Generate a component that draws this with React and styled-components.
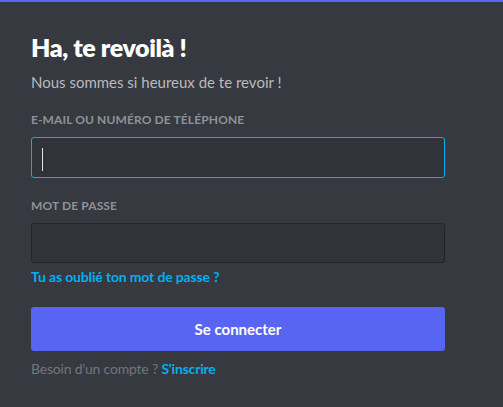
import React from "react";
import styled, { createGlobalStyle } from "styled-components";

const GlobalStyle = createGlobalStyle`
  html, body {
    margin: 0;
    padding: 0;
    background: #36393f;
  }
  body {
    font-family: Lato, "Noto Sans", sans-serif;
    -webkit-font-smoothing: antialiased;
  }
`;

const Page = styled.div`
  min-height: 407px;
  background: #36393f;
  border-top: 2px solid #5865f2;
  box-sizing: border-box;
`;

const Form = styled.form`
  display: flex;
  flex-direction: column;
  width: 414px;
  padding: 30px 0 0 31px;
`;

const Title = styled.h1`
  margin: 0;
  font-size: 25px;
  line-height: 30px;
  font-weight: 800;
  letter-spacing: -0.4px;
  color: #ffffff;
`;

const Subtitle = styled.div`
  margin-top: 10px;
  font-size: 15px;
  line-height: 20px;
  color: #b9bbbe;
`;

const Label = styled.label`
  margin-top: 20px;
  font-size: 12px;
  line-height: 16px;
  font-weight: 700;
  text-transform: uppercase;
  color: #8e9297;
  letter-spacing: 0.01em;
`;

const Input = styled.input`
  margin-top: 9px;
  box-sizing: border-box;
  width: 100%;
  height: ${({ $focused }) => ($focused ? 41 : 40)}px;
  padding: 0 10px;
  border-radius: 3px;
  border: 1px solid ${({ $focused }) => ($focused ? "#00aff4" : "#222428")};
  background: #303339;
  color: #dcddde;
  font-family: inherit;
  font-size: 16px;
  outline: none;
`;

// drawn caret, the reference shows the focused field with its cursor
const Caret = styled.span`
  position: absolute;
  left: 11px;
  top: 20px;
  width: 1px;
  height: 23px;
  background: #e6e6e6;
`;

const Field = styled.div`
  position: relative;
  display: flex;
  flex-direction: column;
`;

const Link = styled.a`
  color: #00aff4;
  font-weight: 700;
  text-decoration: none;
  cursor: pointer;
`;

const Forgot = styled(Link)`
  margin-top: 5px;
  align-self: flex-start;
  font-size: 14px;
  line-height: 18px;
  letter-spacing: -0.15px;
`;

const Submit = styled.button`
  margin-top: 21px;
  height: 44px;
  width: 100%;
  display: flex;
  align-items: center;
  justify-content: center;
  border: none;
  border-radius: 3px;
  background: #5865f2;
  color: #ffffff;
  font-family: inherit;
  font-size: 15px;
  font-weight: 700;
  cursor: pointer;
`;

const Footer = styled.div`
  margin-top: 9px;
  font-size: 14px;
  line-height: 18px;
  letter-spacing: -0.2px;
  color: #72767d;
`;

export default function App() {
  return (
    <>
      <GlobalStyle />
      <Page>
        <Form onSubmit={(e) => e.preventDefault()}>
          <Title>Ha, te revoilà !</Title>
          <Subtitle>Nous sommes si heureux de te revoir !</Subtitle>

          <Label>E-mail ou numéro de téléphone</Label>
          <Field>
            <Input $focused type="text" />
            <Caret />
          </Field>

          <Label>Mot de passe</Label>
          <Input type="password" />

          <Forgot>Tu as oublié ton mot de passe{"\u202f"}?</Forgot>

          <Submit type="submit">Se connecter</Submit>

          <Footer>
            Besoin d'un compte ? <Link>S'inscrire</Link>
          </Footer>
        </Form>
      </Page>
    </>
  );
}
